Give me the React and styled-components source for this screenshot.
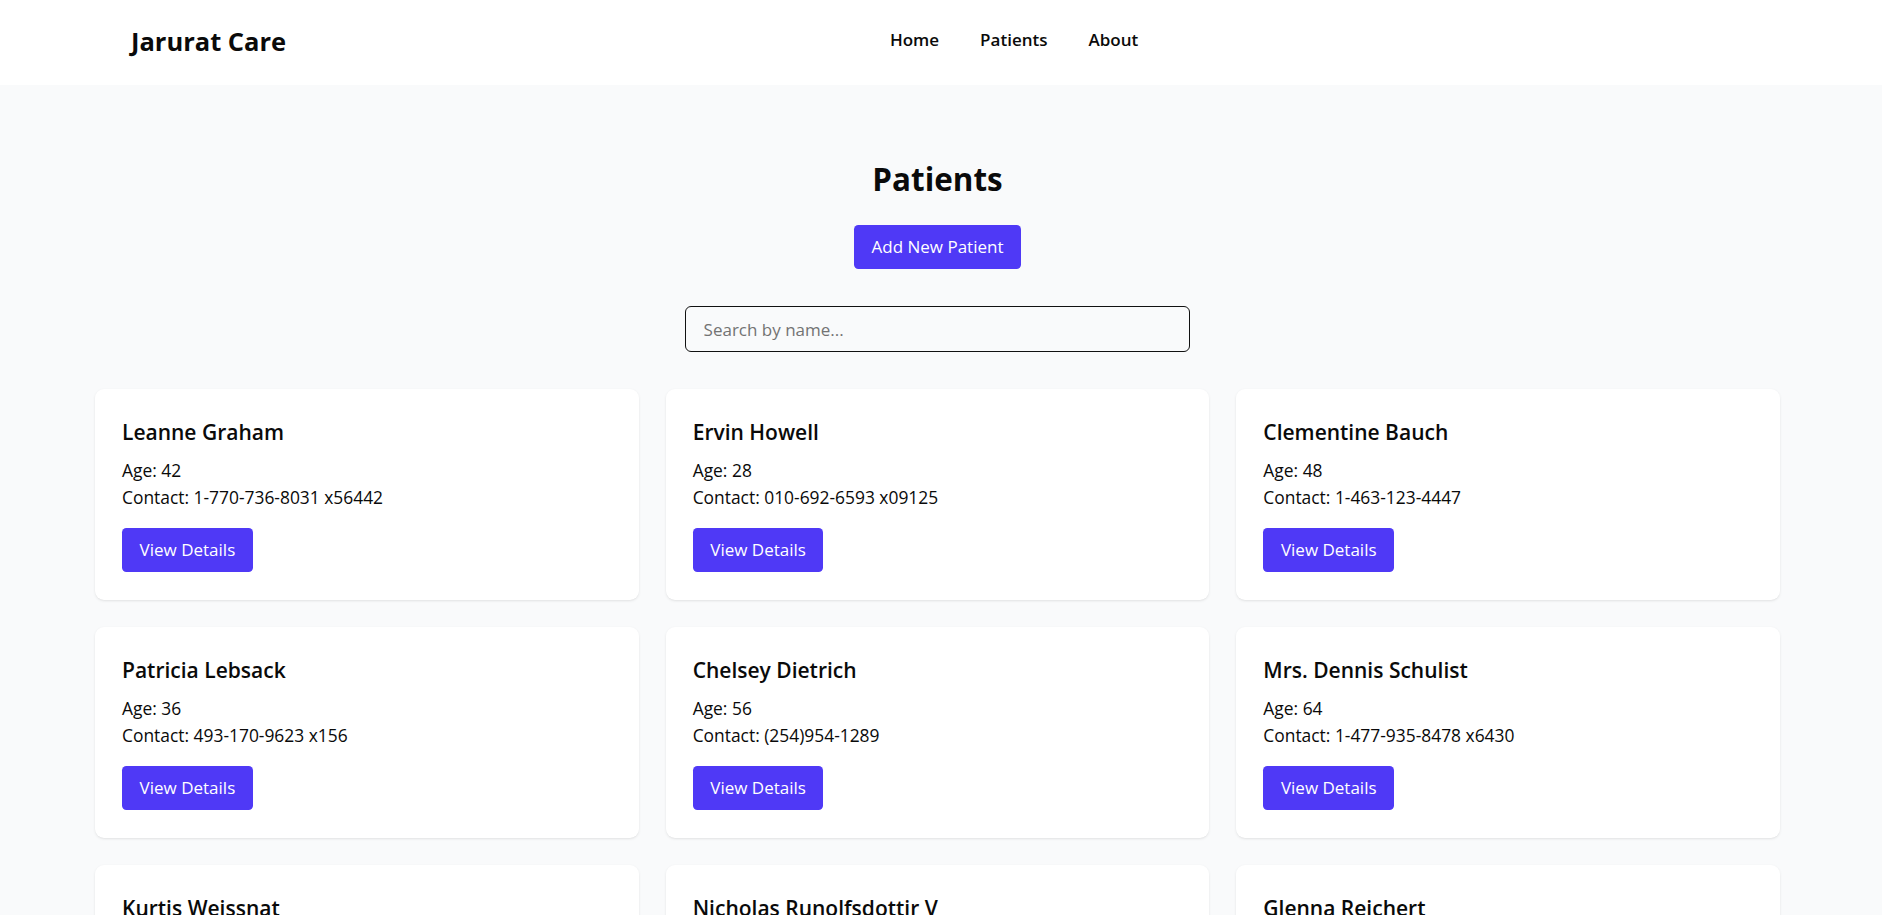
import React, { useState } from "react";
import styled, { createGlobalStyle } from "styled-components";

const GlobalStyle = createGlobalStyle`
  * { box-sizing: border-box; }
  html, body { margin: 0; padding: 0; }
  body {
    background: #f9fafb;
    font-family: "Open Sans", "Noto Sans", "Liberation Sans", sans-serif;
    color: #0a0a0a;
  }
`;

const Header = styled.header`
  height: 85px;
  background: #ffffff;
  display: flex;
  align-items: center;
  justify-content: space-between;
  padding: 0 140px 0 131px;
`;

const Logo = styled.div`
  font-size: 25.5px;
  font-weight: 700;
  line-height: 35px;
  color: #0a0a0a;
  margin-bottom: 2px;
`;

const Nav = styled.nav`
  display: flex;
  gap: 41px;
  margin-bottom: 6px;
`;

const NavLink = styled.a`
  font-size: 17px;
  font-weight: 600;
  line-height: 26px;
  color: #0a0a0a;
  text-decoration: none;
  cursor: pointer;
`;

const Spacer = styled.div`
  width: 0;
`;

const Main = styled.main`
  padding: 73.5px 102px 40px 95px;
  display: flex;
  flex-direction: column;
  align-items: center;
`;

const Title = styled.h1`
  margin: 0 0 26.5px;
  font-size: 31.4px;
  line-height: 40px;
  font-weight: 700;
  color: #0a0a0a;
`;

const PrimaryButton = styled.button`
  background: #4f39f6;
  color: #ffffff;
  border: none;
  border-radius: 4.4px;
  font-family: inherit;
  font-size: 17px;
  line-height: 26.4px;
  padding: 8.8px 17.6px;
  cursor: pointer;
  height: 44px;
`;

const AddButton = styled(PrimaryButton)`
  margin-bottom: 37px;
`;

const SearchInput = styled.input`
  width: 505px;
  height: 46px;
  padding: 8.8px 17.6px;
  border: 1px solid #111111;
  border-radius: 6px;
  background: transparent;
  font-family: inherit;
  font-size: 17px;
  color: #0a0a0a;
  margin-bottom: 37px;
  outline: none;
  &::placeholder {
    color: #737373;
  }
`;

const Grid = styled.div`
  width: 100%;
  display: grid;
  grid-template-columns: repeat(3, 1fr);
  gap: 27px;
`;

const Card = styled.div`
  background: #ffffff;
  border-radius: 9px;
  box-shadow: 0 1px 3px rgba(0, 0, 0, 0.08), 0 1px 2px -1px rgba(0, 0, 0, 0.08);
  padding: 28px 27px 27.5px;
`;

const Name = styled.h2`
  margin: 0 0 9px;
  font-size: 21px;
  line-height: 30.8px;
  font-weight: 600;
  color: #0a0a0a;
`;

const Info = styled.p`
  margin: 0;
  font-size: 17.4px;
  line-height: 27px;
  color: #0a0a0a;
`;

const DetailsButton = styled(PrimaryButton)`
  margin-top: 17.5px;
  display: block;
`;

const patients = [
  { name: "Leanne Graham", age: 42, phone: "1-770-736-8031 x56442" },
  { name: "Ervin Howell", age: 28, phone: "010-692-6593 x09125" },
  { name: "Clementine Bauch", age: 48, phone: "1-463-123-4447" },
  { name: "Patricia Lebsack", age: 36, phone: "493-170-9623 x156" },
  { name: "Chelsey Dietrich", age: 56, phone: "(254)954-1289" },
  { name: "Mrs. Dennis Schulist", age: 64, phone: "1-477-935-8478 x6430" },
  { name: "Kurtis Weissnat", age: 33, phone: "210.067.6132" },
  { name: "Nicholas Runolfsdottir V", age: 51, phone: "586.493.6943 x140" },
  { name: "Glenna Reichert", age: 45, phone: "(775)976-6794 x41206" },
  { name: "Clementina DuBuque", age: 39, phone: "024-648-3804" },
];

export default function App() {
  const [query, setQuery] = useState("");
  const shown = patients.filter((p) =>
    p.name.toLowerCase().includes(query.toLowerCase())
  );
  return (
    <>
      <GlobalStyle />
      <Header>
        <Logo>Jarurat Care</Logo>
        <Nav>
          <NavLink>Home</NavLink>
          <NavLink>Patients</NavLink>
          <NavLink>About</NavLink>
        </Nav>
        <Spacer />
      </Header>
      <Main>
        <Title>Patients</Title>
        <AddButton>Add New Patient</AddButton>
        <SearchInput
          placeholder="Search by name..."
          value={query}
          onChange={(e) => setQuery(e.target.value)}
        />
        <Grid>
          {shown.map((p) => (
            <Card key={p.name}>
              <Name>{p.name}</Name>
              <Info>Age: {p.age}</Info>
              <Info>Contact: {p.phone}</Info>
              <DetailsButton>View Details</DetailsButton>
            </Card>
          ))}
        </Grid>
      </Main>
    </>
  );
}
